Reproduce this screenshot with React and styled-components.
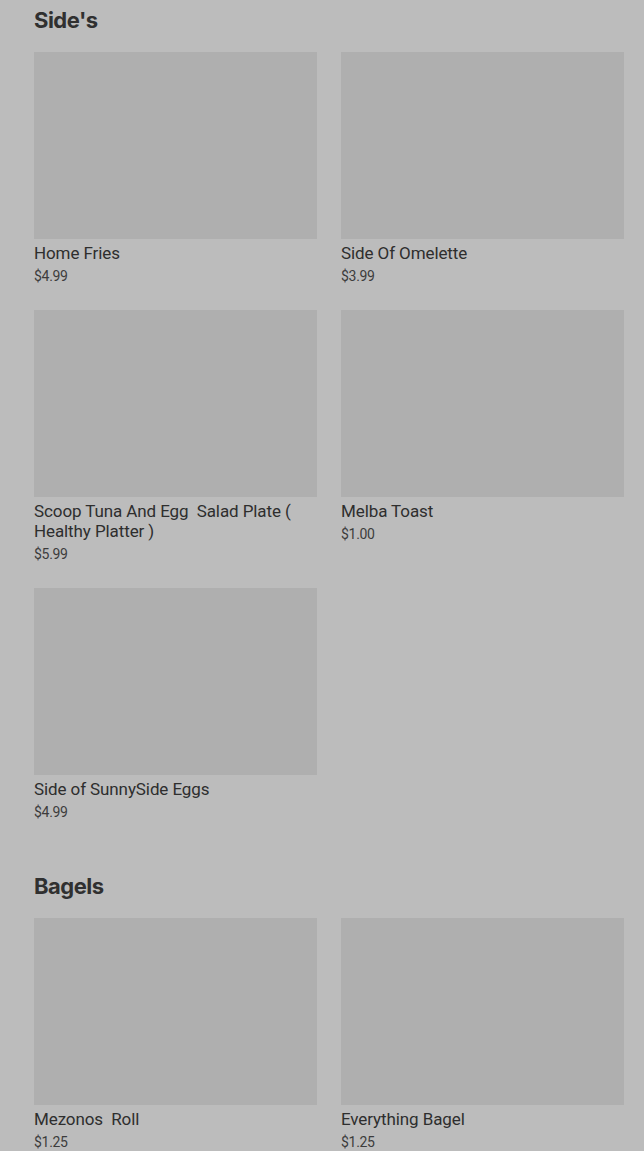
import React from "react";
import styled, { createGlobalStyle } from "styled-components";

const GlobalStyle = createGlobalStyle`
  body {
    margin: 0;
    background: #bcbcbc;
    font-family: Roboto, "Liberation Sans", sans-serif;
    color: #333333;
  }
`;

const Page = styled.div`
  padding: 4px 20px 0 34px;
  display: flex;
  flex-direction: column;
  gap: 48px;
`;

const Section = styled.section`
  display: flex;
  flex-direction: column;
  gap: 16px;
`;

const Heading = styled.h2`
  margin: 0;
  font-family: Inter, Roboto, sans-serif;
  font-size: 22px;
  line-height: 32px;
  font-weight: 700;
  letter-spacing: -0.5px;
  color: #303030;
`;

const Grid = styled.div`
  display: grid;
  grid-template-columns: 283px 283px;
  column-gap: 24px;
  row-gap: 24px;
`;

const Card = styled.div`
  display: flex;
  flex-direction: column;
`;

const Thumb = styled.div`
  height: 187px;
  background: #afafaf;
`;

const Name = styled.div`
  margin-top: 4px;
  font-size: 17px;
  line-height: 20px;
  font-weight: 400;
  letter-spacing: -0.1px;
  color: #2e2e2e;
  white-space: pre-wrap;
`;

const Price = styled.div`
  margin-top: 3px;
  font-size: 14px;
  line-height: 20px;
  color: #3c3c3c;
  letter-spacing: -0.3px;
`;

const menu = [
  {
    title: "Side's",
    items: [
      { name: "Home Fries", price: "$4.99" },
      { name: "Side Of Omelette", price: "$3.99" },
      { name: "Scoop Tuna And Egg  Salad Plate ( Healthy Platter )", price: "$5.99" },
      { name: "Melba Toast", price: "$1.00" },
      { name: "Side of SunnySide Eggs", price: "$4.99" },
    ],
  },
  {
    title: "Bagels",
    items: [
      { name: "Mezonos  Roll", price: "$1.25" },
      { name: "Everything Bagel", price: "$1.25" },
    ],
  },
];

const App = () => {
  return (
    <>
      <GlobalStyle />
      <Page>
        {menu.map((section) => (
          <Section key={section.title}>
            <Heading>{section.title}</Heading>
            <Grid>
              {section.items.map((item) => (
                <Card key={item.name}>
                  <Thumb />
                  <Name>{item.name}</Name>
                  <Price>{item.price}</Price>
                </Card>
              ))}
            </Grid>
          </Section>
        ))}
      </Page>
    </>
  );
};

export default App;
